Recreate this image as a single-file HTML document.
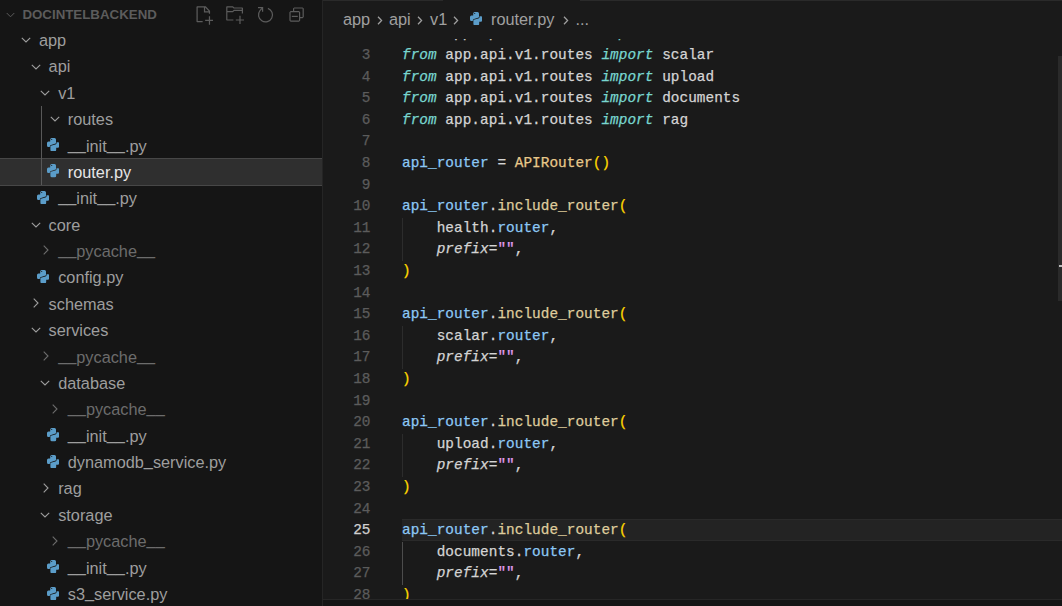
<!DOCTYPE html>
<html><head><meta charset="utf-8"><style>
*{box-sizing:border-box}
html,body{margin:0;padding:0;width:1062px;height:606px;overflow:hidden;background:#1a1a1a;font-family:"Liberation Sans",sans-serif}
#sb{position:absolute;left:0;top:0;width:322px;height:606px;background:#151515;overflow:hidden}
#sbb{position:absolute;left:322px;top:0;width:1px;height:606px;background:#252525}
.hdr{position:absolute;left:0;top:0;width:322px;height:27px;color:#5c5c5c}
.hdr .t{position:absolute;left:22.4px;top:1px;line-height:27px;font-size:13.3px;font-weight:bold;letter-spacing:0}
.hdr .ic{position:absolute;line-height:0} .hdr svg{display:block}
.row{position:absolute;left:0;width:322px;height:26.38px;color:#9e9e9e}
.row.dim{color:#6c6c6c}
.row.sel{height:28px;background:#2f2f2f;border-top:1px solid #474747;border-bottom:1px solid #474747}
.row .t{position:absolute;top:0;line-height:26.38px;font-size:16.3px;white-space:nowrap}
.row.sel .t{top:0.4px;color:#e6e6e6}
.row .ic{position:absolute;display:block;line-height:0}
.row.sel .ic{margin-top:0.4px}
.row svg{display:block} .row u{text-decoration:none;position:relative;top:-2px}
.tguide{position:absolute;left:41px;width:1px;background:#585858}
#ed{position:absolute;left:323px;top:0;width:739px;height:606px;background:#1a1a1a;overflow:hidden}
.ln{position:absolute;left:0;width:47.5px;text-align:right;font-family:"Liberation Mono",monospace;font-size:14.4px;line-height:21.6px;color:#5c5c5c;white-space:pre;-webkit-text-stroke:0.25px currentColor}
.ln.cur{color:#d0d0d0}
.cl{position:absolute;left:79px;font-family:"Liberation Mono",monospace;font-size:14.4px;letter-spacing:0.035px;line-height:21.6px;color:#d4d4d4;white-space:pre;-webkit-text-stroke:0.25px currentColor}
.kw{color:#78d6cf;font-style:italic}
.var{color:#8cc8f5}
.fn{color:#dfcc9c}
.cls{color:#e8c88a}
.br{color:#ffd700}
.prm{font-style:italic;color:#d4d4d4}
.str{color:#e19ef0}
.guide{position:absolute;left:79px;width:1px;background:#2c2c2c}
.guide.act{background:#4c4c4c}
#cur{position:absolute;left:79px;top:518.96px;width:660px;height:22.0px;background:#232323;border-top:1px solid #2a2a2a;border-bottom:1px solid #2a2a2a}
#bc{position:absolute;left:0;top:0;width:739px;height:39px;background:#1a1a1a;color:#a0a0a0;font-size:16.3px}
#bc span{position:absolute;top:0;line-height:38px;white-space:nowrap}
#bc .ic{line-height:0}
#tb{position:absolute;left:0;top:0;width:120px;height:1px;background:#2a2a2a} #tb2{position:absolute;left:257px;top:0;width:482px;height:1px;background:#2a2a2a}
#scr{position:absolute;left:735px;top:56px;width:4px;height:245px;background:#2a2a2a}
#tick{position:absolute;left:736px;top:265px;width:3px;height:2px;background:#bbbbbb}
#pb{position:absolute;left:0;top:599px;width:739px;height:1px;background:#262626} #pbg{position:absolute;left:0;top:600px;width:739px;height:6px;background:#151515}
</style></head><body>
<div id="sb">
<div class="hdr">
<span class="ic" style="left:6.4px;top:11.8px"><svg class="chev" width="9" height="6" viewBox="0 0 10 6"><path d="M0.8 0.8L5 5L9.2 0.8" fill="none" stroke="currentColor" stroke-width="1.1"/></svg></span>
<span class="t">DOCINTELBACKEND</span>
<span class="ic" style="left:193.6px;top:5px"><svg width="19.8" height="19.8" viewBox="0 0 16 16" fill="currentColor"><path d="M9.5 1.1l3.4 3.5.1.4v2h-1V6H8V2H3v11h4v1H2.5l-.5-.5v-12l.5-.5h6.7l.3.1zM9 2v3h2.9L9 2zm4 14h-1v-3H9v-1h3V9h1v3h3v1h-3v3z"/></svg></span>
<span class="ic" style="left:225px;top:5px"><svg width="19.2" height="19.2" viewBox="0 0 16 16" fill="currentColor"><path d="M14.5 2H7.71l-.85-.85L6.51 1h-5l-.5.5v11l.5.5H7v-1H1.99V6h4.49l.35-.15.86-.86H14v1.5l-.001.51h1.011V2.5L14.5 2zm-.51 2h-6.5l-.35.15-.86.86H2v-3h4.29l.85.85.36.15H14l-.01.99zM13 16h-1v-3H9v-1h3V9h1v3h3v1h-3v3z"/></svg></span>
<span class="ic" style="left:254px;top:3px"><svg width="24" height="24" viewBox="0 0 24 24"><path d="M13.89 5.32A7 7 0 1 1 5.98 7.59L8.6 4.6" fill="none" stroke="currentColor" stroke-width="1.2"/><path d="M4 4.6H8.6V8.7" fill="none" stroke="currentColor" stroke-width="1.2"/></svg></span>
<span class="ic" style="left:287px;top:5px"><svg width="19.2" height="19.2" viewBox="0 0 16 16" fill="currentColor"><path d="M9 9H4v1h5V9z"/><path fill-rule="evenodd" d="M5 3l1-1h7l1 1v7l-1 1h-2v2l-1 1H3l-1-1V6l1-1h2V3zm1 2h4l1 1v4h2V3H6v2zm4 1H3v7h7V6z"/></svg></span>
</div>
<div class="row" style="top:27.01px"><span class="ic" style="left:20.90px;top:10.19px"><svg class="chev" width="10" height="6" viewBox="0 0 10 6"><path d="M0.8 0.8L5 5L9.2 0.8" fill="none" stroke="currentColor" stroke-width="1.1"/></svg></span><span class="t" style="left:39.00px">app</span></div><div class="row" style="top:53.39px"><span class="ic" style="left:30.50px;top:10.19px"><svg class="chev" width="10" height="6" viewBox="0 0 10 6"><path d="M0.8 0.8L5 5L9.2 0.8" fill="none" stroke="currentColor" stroke-width="1.1"/></svg></span><span class="t" style="left:48.60px">api</span></div><div class="row" style="top:79.77px"><span class="ic" style="left:40.10px;top:10.19px"><svg class="chev" width="10" height="6" viewBox="0 0 10 6"><path d="M0.8 0.8L5 5L9.2 0.8" fill="none" stroke="currentColor" stroke-width="1.1"/></svg></span><span class="t" style="left:58.20px">v1</span></div><div class="row" style="top:106.15px"><span class="ic" style="left:49.70px;top:10.19px"><svg class="chev" width="10" height="6" viewBox="0 0 10 6"><path d="M0.8 0.8L5 5L9.2 0.8" fill="none" stroke="currentColor" stroke-width="1.1"/></svg></span><span class="t" style="left:67.80px">routes</span></div><div class="row" style="top:132.53px"><span class="ic" style="left:46.70px;top:5.59px"><svg class="py" width="12.4" height="13.3" viewBox="0 0 12.4 13.3"><path fill="#5b9dc9" d="M3.2 1.5Q3.2 0 4.7 0H7.5Q9 0 9 1.5V5.1Q9 5.4 8.6 5.5L4 6.9Q2.8 7.2 2.8 8.4V9.1H1.4Q0 9.1 0 7.5V5.1Q0 3.6 1.5 3.6H3.2Z"/><path fill="#5b9dc9" d="M9.2 11.8Q9.2 13.3 7.7 13.3H4.9Q3.4 13.3 3.4 11.8V8.2Q3.4 7.9 3.8 7.8L8.4 6.4Q9.6 6.1 9.6 4.9V4.2H11Q12.4 4.2 12.4 5.8V8.2Q12.4 9.7 10.9 9.7H9.2Z"/><circle cx="4.7" cy="1.5" r=".6" fill="#1a1a1a"/></svg></span><span class="t" style="left:67.80px"><u>_</u><u>_</u>init<u>_</u><u>_</u>.py</span></div><div class="row sel" style="top:157.51px"><span class="ic" style="left:46.70px;top:5.59px"><svg class="py" width="12.4" height="13.3" viewBox="0 0 12.4 13.3"><path fill="#5b9dc9" d="M3.2 1.5Q3.2 0 4.7 0H7.5Q9 0 9 1.5V5.1Q9 5.4 8.6 5.5L4 6.9Q2.8 7.2 2.8 8.4V9.1H1.4Q0 9.1 0 7.5V5.1Q0 3.6 1.5 3.6H3.2Z"/><path fill="#5b9dc9" d="M9.2 11.8Q9.2 13.3 7.7 13.3H4.9Q3.4 13.3 3.4 11.8V8.2Q3.4 7.9 3.8 7.8L8.4 6.4Q9.6 6.1 9.6 4.9V4.2H11Q12.4 4.2 12.4 5.8V8.2Q12.4 9.7 10.9 9.7H9.2Z"/><circle cx="4.7" cy="1.5" r=".6" fill="#1a1a1a"/></svg></span><span class="t" style="left:67.80px">router.py</span></div><div class="row" style="top:185.29px"><span class="ic" style="left:37.10px;top:5.59px"><svg class="py" width="12.4" height="13.3" viewBox="0 0 12.4 13.3"><path fill="#5b9dc9" d="M3.2 1.5Q3.2 0 4.7 0H7.5Q9 0 9 1.5V5.1Q9 5.4 8.6 5.5L4 6.9Q2.8 7.2 2.8 8.4V9.1H1.4Q0 9.1 0 7.5V5.1Q0 3.6 1.5 3.6H3.2Z"/><path fill="#5b9dc9" d="M9.2 11.8Q9.2 13.3 7.7 13.3H4.9Q3.4 13.3 3.4 11.8V8.2Q3.4 7.9 3.8 7.8L8.4 6.4Q9.6 6.1 9.6 4.9V4.2H11Q12.4 4.2 12.4 5.8V8.2Q12.4 9.7 10.9 9.7H9.2Z"/><circle cx="4.7" cy="1.5" r=".6" fill="#1a1a1a"/></svg></span><span class="t" style="left:58.20px"><u>_</u><u>_</u>init<u>_</u><u>_</u>.py</span></div><div class="row" style="top:211.67px"><span class="ic" style="left:30.50px;top:10.19px"><svg class="chev" width="10" height="6" viewBox="0 0 10 6"><path d="M0.8 0.8L5 5L9.2 0.8" fill="none" stroke="currentColor" stroke-width="1.1"/></svg></span><span class="t" style="left:48.60px">core</span></div><div class="row dim" style="top:238.05px"><span class="ic" style="left:42.60px;top:7.39px"><svg class="chevr" width="6" height="10" viewBox="0 0 6 10"><path d="M0.7 0.7L5 5L0.7 9.3" fill="none" stroke="currentColor" stroke-width="1.1"/></svg></span><span class="t" style="left:58.20px"><u>_</u><u>_</u>pycache<u>_</u><u>_</u></span></div><div class="row" style="top:264.43px"><span class="ic" style="left:37.10px;top:5.59px"><svg class="py" width="12.4" height="13.3" viewBox="0 0 12.4 13.3"><path fill="#5b9dc9" d="M3.2 1.5Q3.2 0 4.7 0H7.5Q9 0 9 1.5V5.1Q9 5.4 8.6 5.5L4 6.9Q2.8 7.2 2.8 8.4V9.1H1.4Q0 9.1 0 7.5V5.1Q0 3.6 1.5 3.6H3.2Z"/><path fill="#5b9dc9" d="M9.2 11.8Q9.2 13.3 7.7 13.3H4.9Q3.4 13.3 3.4 11.8V8.2Q3.4 7.9 3.8 7.8L8.4 6.4Q9.6 6.1 9.6 4.9V4.2H11Q12.4 4.2 12.4 5.8V8.2Q12.4 9.7 10.9 9.7H9.2Z"/><circle cx="4.7" cy="1.5" r=".6" fill="#1a1a1a"/></svg></span><span class="t" style="left:58.20px">config.py</span></div><div class="row" style="top:290.81px"><span class="ic" style="left:33.00px;top:7.39px"><svg class="chevr" width="6" height="10" viewBox="0 0 6 10"><path d="M0.7 0.7L5 5L0.7 9.3" fill="none" stroke="currentColor" stroke-width="1.1"/></svg></span><span class="t" style="left:48.60px">schemas</span></div><div class="row" style="top:317.19px"><span class="ic" style="left:30.50px;top:10.19px"><svg class="chev" width="10" height="6" viewBox="0 0 10 6"><path d="M0.8 0.8L5 5L9.2 0.8" fill="none" stroke="currentColor" stroke-width="1.1"/></svg></span><span class="t" style="left:48.60px">services</span></div><div class="row dim" style="top:343.57px"><span class="ic" style="left:42.60px;top:7.39px"><svg class="chevr" width="6" height="10" viewBox="0 0 6 10"><path d="M0.7 0.7L5 5L0.7 9.3" fill="none" stroke="currentColor" stroke-width="1.1"/></svg></span><span class="t" style="left:58.20px"><u>_</u><u>_</u>pycache<u>_</u><u>_</u></span></div><div class="row" style="top:369.95px"><span class="ic" style="left:40.10px;top:10.19px"><svg class="chev" width="10" height="6" viewBox="0 0 10 6"><path d="M0.8 0.8L5 5L9.2 0.8" fill="none" stroke="currentColor" stroke-width="1.1"/></svg></span><span class="t" style="left:58.20px">database</span></div><div class="row dim" style="top:396.33px"><span class="ic" style="left:52.20px;top:7.39px"><svg class="chevr" width="6" height="10" viewBox="0 0 6 10"><path d="M0.7 0.7L5 5L0.7 9.3" fill="none" stroke="currentColor" stroke-width="1.1"/></svg></span><span class="t" style="left:67.80px"><u>_</u><u>_</u>pycache<u>_</u><u>_</u></span></div><div class="row" style="top:422.71px"><span class="ic" style="left:46.70px;top:5.59px"><svg class="py" width="12.4" height="13.3" viewBox="0 0 12.4 13.3"><path fill="#5b9dc9" d="M3.2 1.5Q3.2 0 4.7 0H7.5Q9 0 9 1.5V5.1Q9 5.4 8.6 5.5L4 6.9Q2.8 7.2 2.8 8.4V9.1H1.4Q0 9.1 0 7.5V5.1Q0 3.6 1.5 3.6H3.2Z"/><path fill="#5b9dc9" d="M9.2 11.8Q9.2 13.3 7.7 13.3H4.9Q3.4 13.3 3.4 11.8V8.2Q3.4 7.9 3.8 7.8L8.4 6.4Q9.6 6.1 9.6 4.9V4.2H11Q12.4 4.2 12.4 5.8V8.2Q12.4 9.7 10.9 9.7H9.2Z"/><circle cx="4.7" cy="1.5" r=".6" fill="#1a1a1a"/></svg></span><span class="t" style="left:67.80px"><u>_</u><u>_</u>init<u>_</u><u>_</u>.py</span></div><div class="row" style="top:449.09px"><span class="ic" style="left:46.70px;top:5.59px"><svg class="py" width="12.4" height="13.3" viewBox="0 0 12.4 13.3"><path fill="#5b9dc9" d="M3.2 1.5Q3.2 0 4.7 0H7.5Q9 0 9 1.5V5.1Q9 5.4 8.6 5.5L4 6.9Q2.8 7.2 2.8 8.4V9.1H1.4Q0 9.1 0 7.5V5.1Q0 3.6 1.5 3.6H3.2Z"/><path fill="#5b9dc9" d="M9.2 11.8Q9.2 13.3 7.7 13.3H4.9Q3.4 13.3 3.4 11.8V8.2Q3.4 7.9 3.8 7.8L8.4 6.4Q9.6 6.1 9.6 4.9V4.2H11Q12.4 4.2 12.4 5.8V8.2Q12.4 9.7 10.9 9.7H9.2Z"/><circle cx="4.7" cy="1.5" r=".6" fill="#1a1a1a"/></svg></span><span class="t" style="left:67.80px">dynamodb<u>_</u>service.py</span></div><div class="row" style="top:475.47px"><span class="ic" style="left:42.60px;top:7.39px"><svg class="chevr" width="6" height="10" viewBox="0 0 6 10"><path d="M0.7 0.7L5 5L0.7 9.3" fill="none" stroke="currentColor" stroke-width="1.1"/></svg></span><span class="t" style="left:58.20px">rag</span></div><div class="row" style="top:501.85px"><span class="ic" style="left:40.10px;top:10.19px"><svg class="chev" width="10" height="6" viewBox="0 0 10 6"><path d="M0.8 0.8L5 5L9.2 0.8" fill="none" stroke="currentColor" stroke-width="1.1"/></svg></span><span class="t" style="left:58.20px">storage</span></div><div class="row dim" style="top:528.23px"><span class="ic" style="left:52.20px;top:7.39px"><svg class="chevr" width="6" height="10" viewBox="0 0 6 10"><path d="M0.7 0.7L5 5L0.7 9.3" fill="none" stroke="currentColor" stroke-width="1.1"/></svg></span><span class="t" style="left:67.80px"><u>_</u><u>_</u>pycache<u>_</u><u>_</u></span></div><div class="row" style="top:554.61px"><span class="ic" style="left:46.70px;top:5.59px"><svg class="py" width="12.4" height="13.3" viewBox="0 0 12.4 13.3"><path fill="#5b9dc9" d="M3.2 1.5Q3.2 0 4.7 0H7.5Q9 0 9 1.5V5.1Q9 5.4 8.6 5.5L4 6.9Q2.8 7.2 2.8 8.4V9.1H1.4Q0 9.1 0 7.5V5.1Q0 3.6 1.5 3.6H3.2Z"/><path fill="#5b9dc9" d="M9.2 11.8Q9.2 13.3 7.7 13.3H4.9Q3.4 13.3 3.4 11.8V8.2Q3.4 7.9 3.8 7.8L8.4 6.4Q9.6 6.1 9.6 4.9V4.2H11Q12.4 4.2 12.4 5.8V8.2Q12.4 9.7 10.9 9.7H9.2Z"/><circle cx="4.7" cy="1.5" r=".6" fill="#1a1a1a"/></svg></span><span class="t" style="left:67.80px"><u>_</u><u>_</u>init<u>_</u><u>_</u>.py</span></div><div class="row" style="top:580.99px"><span class="ic" style="left:46.70px;top:5.59px"><svg class="py" width="12.4" height="13.3" viewBox="0 0 12.4 13.3"><path fill="#5b9dc9" d="M3.2 1.5Q3.2 0 4.7 0H7.5Q9 0 9 1.5V5.1Q9 5.4 8.6 5.5L4 6.9Q2.8 7.2 2.8 8.4V9.1H1.4Q0 9.1 0 7.5V5.1Q0 3.6 1.5 3.6H3.2Z"/><path fill="#5b9dc9" d="M9.2 11.8Q9.2 13.3 7.7 13.3H4.9Q3.4 13.3 3.4 11.8V8.2Q3.4 7.9 3.8 7.8L8.4 6.4Q9.6 6.1 9.6 4.9V4.2H11Q12.4 4.2 12.4 5.8V8.2Q12.4 9.7 10.9 9.7H9.2Z"/><circle cx="4.7" cy="1.5" r=".6" fill="#1a1a1a"/></svg></span><span class="t" style="left:67.80px">s3<u>_</u>service.py</span></div>
<div class="tguide" style="top:106.15px;height:79.14px"></div>
</div>
<div id="sbb"></div>
<div id="ed">
<div id="cur"></div>
<div class="guide" style="top:217.76px;height:43.20px"></div><div class="guide" style="top:325.76px;height:43.20px"></div><div class="guide" style="top:433.76px;height:43.20px"></div><div class="guide act" style="top:541.76px;height:43.20px"></div>
<div class="ln" style="top:23.36px">2</div><div class="cl" style="top:23.36px"><span class="kw">from</span> app.api.v1.routes <span class="kw">import</span> health</div><div class="ln" style="top:44.96px">3</div><div class="cl" style="top:44.96px"><span class="kw">from</span> app.api.v1.routes <span class="kw">import</span> scalar</div><div class="ln" style="top:66.56px">4</div><div class="cl" style="top:66.56px"><span class="kw">from</span> app.api.v1.routes <span class="kw">import</span> upload</div><div class="ln" style="top:88.16px">5</div><div class="cl" style="top:88.16px"><span class="kw">from</span> app.api.v1.routes <span class="kw">import</span> documents</div><div class="ln" style="top:109.76px">6</div><div class="cl" style="top:109.76px"><span class="kw">from</span> app.api.v1.routes <span class="kw">import</span> rag</div><div class="ln" style="top:131.36px">7</div><div class="cl" style="top:131.36px"></div><div class="ln" style="top:152.96px">8</div><div class="cl" style="top:152.96px"><span class="var">api_router</span> = <span class="cls">APIRouter</span><span class="br">()</span></div><div class="ln" style="top:174.56px">9</div><div class="cl" style="top:174.56px"></div><div class="ln" style="top:196.16px">10</div><div class="cl" style="top:196.16px"><span class="var">api_router</span>.<span class="fn">include_router</span><span class="br">(</span></div><div class="ln" style="top:217.76px">11</div><div class="cl" style="top:217.76px">    health.<span class="var">router</span>,</div><div class="ln" style="top:239.36px">12</div><div class="cl" style="top:239.36px">    <span class="prm">prefix</span>=<span class="str">""</span>,</div><div class="ln" style="top:260.96px">13</div><div class="cl" style="top:260.96px"><span class="br">)</span></div><div class="ln" style="top:282.56px">14</div><div class="cl" style="top:282.56px"></div><div class="ln" style="top:304.16px">15</div><div class="cl" style="top:304.16px"><span class="var">api_router</span>.<span class="fn">include_router</span><span class="br">(</span></div><div class="ln" style="top:325.76px">16</div><div class="cl" style="top:325.76px">    scalar.<span class="var">router</span>,</div><div class="ln" style="top:347.36px">17</div><div class="cl" style="top:347.36px">    <span class="prm">prefix</span>=<span class="str">""</span>,</div><div class="ln" style="top:368.96px">18</div><div class="cl" style="top:368.96px"><span class="br">)</span></div><div class="ln" style="top:390.56px">19</div><div class="cl" style="top:390.56px"></div><div class="ln" style="top:412.16px">20</div><div class="cl" style="top:412.16px"><span class="var">api_router</span>.<span class="fn">include_router</span><span class="br">(</span></div><div class="ln" style="top:433.76px">21</div><div class="cl" style="top:433.76px">    upload.<span class="var">router</span>,</div><div class="ln" style="top:455.36px">22</div><div class="cl" style="top:455.36px">    <span class="prm">prefix</span>=<span class="str">""</span>,</div><div class="ln" style="top:476.96px">23</div><div class="cl" style="top:476.96px"><span class="br">)</span></div><div class="ln" style="top:498.56px">24</div><div class="cl" style="top:498.56px"></div><div class="ln cur" style="top:520.16px">25</div><div class="cl" style="top:520.16px"><span class="var">api_router</span>.<span class="fn">include_router</span><span class="br">(</span></div><div class="ln" style="top:541.76px">26</div><div class="cl" style="top:541.76px">    documents.<span class="var">router</span>,</div><div class="ln" style="top:563.36px">27</div><div class="cl" style="top:563.36px">    <span class="prm">prefix</span>=<span class="str">""</span>,</div><div class="ln" style="top:584.96px">28</div><div class="cl" style="top:584.96px"><span class="br">)</span></div>
<div id="bc">
<span style="left:20px">app</span>
<span class="ic" style="left:53.5px;top:15.5px"><svg width="6" height="9" viewBox="0 0 6 9"><path d="M1 0.8L4.6 4.5L1 8.2" fill="none" stroke="currentColor" stroke-width="1.25"/></svg></span>
<span style="left:66px">api</span>
<span class="ic" style="left:94px;top:15.5px"><svg width="6" height="9" viewBox="0 0 6 9"><path d="M1 0.8L4.6 4.5L1 8.2" fill="none" stroke="currentColor" stroke-width="1.25"/></svg></span>
<span style="left:107px">v1</span>
<span class="ic" style="left:129.5px;top:15.5px"><svg width="6" height="9" viewBox="0 0 6 9"><path d="M1 0.8L4.6 4.5L1 8.2" fill="none" stroke="currentColor" stroke-width="1.25"/></svg></span>
<span class="ic" style="left:146.5px;top:11.8px"><svg class="py" width="12.4" height="13.3" viewBox="0 0 12.4 13.3"><path fill="#5b9dc9" d="M3.2 1.5Q3.2 0 4.7 0H7.5Q9 0 9 1.5V5.1Q9 5.4 8.6 5.5L4 6.9Q2.8 7.2 2.8 8.4V9.1H1.4Q0 9.1 0 7.5V5.1Q0 3.6 1.5 3.6H3.2Z"/><path fill="#5b9dc9" d="M9.2 11.8Q9.2 13.3 7.7 13.3H4.9Q3.4 13.3 3.4 11.8V8.2Q3.4 7.9 3.8 7.8L8.4 6.4Q9.6 6.1 9.6 4.9V4.2H11Q12.4 4.2 12.4 5.8V8.2Q12.4 9.7 10.9 9.7H9.2Z"/><circle cx="4.7" cy="1.5" r=".6" fill="#1a1a1a"/></svg></span>
<span style="left:168px">router.py</span>
<span class="ic" style="left:240px;top:15.5px"><svg width="6" height="9" viewBox="0 0 6 9"><path d="M1 0.8L4.6 4.5L1 8.2" fill="none" stroke="currentColor" stroke-width="1.25"/></svg></span>
<span style="left:252.5px">...</span>
</div>
<div id="tb"></div><div id="tb2"></div>
<div id="scr"></div><div id="tick"></div>
<div id="pb"></div><div id="pbg"></div>
</div>
</body></html>
